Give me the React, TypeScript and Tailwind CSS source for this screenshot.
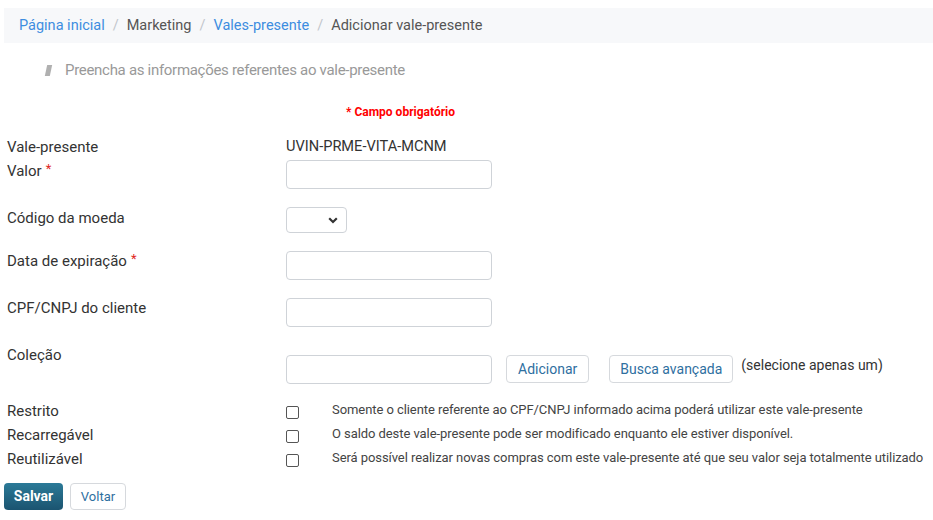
import React from "react";

const font = { fontFamily: "Roboto, 'Noto Sans', sans-serif" };

function Label({ children, required }: { children: React.ReactNode; required?: boolean }) {
  return (
    <div className="w-[279px] shrink-0 text-[15px] leading-[20px] text-[#333]">
      {children}
      {required && <span className="ml-1 align-top text-[13px] leading-[16px] text-[#e0281e]">*</span>}
    </div>
  );
}

function TextInput() {
  return (
    <input
      type="text"
      className="h-[29px] w-[206px] rounded-[4px] border border-[#cfd3d8] bg-white px-2 text-[14px] outline-none"
    />
  );
}

function CheckRow({ label, text }: { label: string; text: string }) {
  return (
    <div className="flex h-[24px] items-start">
      <Label>{label}</Label>
      <div className="w-[46px] shrink-0 pt-[5px]">
        <span className="block h-[13px] w-[13px] rounded-[2px] border border-[#555] bg-white" />
      </div>
      <div className="text-[13px] leading-[18px] tracking-[-0.07px] text-[#444]">{text}</div>
    </div>
  );
}

export default function App() {
  return (
    <div className="min-h-[520px] bg-white" style={font}>
      <div className="pt-2">
        <div className="ml-1 flex h-[35px] items-center bg-[#f7f8fa] pl-[15px] text-[14.5px]">
          <span className="text-[#3d8de0]">Página inicial</span>
          <span className="px-[8px] text-[#c2c6cc]">/</span>
          <span className="text-[#555]">Marketing</span>
          <span className="px-[8px] text-[#c2c6cc]">/</span>
          <span className="text-[#3d8de0]">Vales-presente</span>
          <span className="px-[8px] text-[#c2c6cc]">/</span>
          <span className="text-[#555]">Adicionar vale-presente</span>
        </div>
      </div>

      <div className="mt-[16px] flex h-[22px] items-center pl-[46px]">
        <span className="mr-[14px] inline-block h-[11px] w-[5px] -skew-x-12 bg-[#b0b0b0]" />
        <span className="text-[15px] tracking-[-0.3px] text-[#999]">
          Preencha as informações referentes ao vale-presente
        </span>
      </div>

      <div className="mt-[22px] pl-[346px] text-[12px] font-bold text-[#ff0000]">* Campo obrigatório</div>

      <div className="mt-[16px] pl-[7px]">
        <div className="flex h-[24px] items-start">
          <Label>Vale-presente</Label>
          <div className="text-[14.6px] leading-[18px] text-[#333]">UVIN-PRME-VITA-MCNM</div>
        </div>

        <div className="flex h-[47px] items-start">
          <Label required>Valor</Label>
          <div className="-mt-[1px]">
            <TextInput />
          </div>
        </div>

        <div className="flex h-[43px] items-start">
          <Label>Código da moeda</Label>
          <div className="relative -mt-[1px] h-[26px] w-[61px] rounded-[4px] border border-[#cfd3d8] bg-white">
            <svg
              className="absolute right-[8px] top-[9px]"
              width="10"
              height="7"
              viewBox="0 0 10 7"
              fill="none"
              stroke="#333"
              strokeWidth="2.2"
            >
              <path d="M1.2 1.3 5 5 8.8 1.3" />
            </svg>
          </div>
        </div>

        <div className="flex h-[47px] items-start">
          <Label required>Data de expiração</Label>
          <div>
            <TextInput />
          </div>
        </div>

        <div className="flex h-[47px] items-start">
          <Label>CPF/CNPJ do cliente</Label>
          <div>
            <TextInput />
          </div>
        </div>

        <div className="flex h-[56px] items-start">
          <Label>Coleção</Label>
          <div className="mt-[10px] flex items-start">
            <TextInput />
            <button className="ml-[14px] h-[28px] rounded-[4px] border border-[#d6d9dd] bg-white px-[11px] text-[14px] text-[#2f6f9f]">
              Adicionar
            </button>
            <button className="ml-[20px] h-[28px] rounded-[4px] border border-[#d6d9dd] bg-white px-[10px] text-[14px] text-[#2f6f9f]">
              Busca avançada
            </button>
            <span className="ml-[8px] mt-[1px] text-[14px] leading-[18px] text-[#333]">(selecione apenas um)</span>
          </div>
        </div>

        <CheckRow
          label="Restrito"
          text="Somente o cliente referente ao CPF/CNPJ informado acima poderá utilizar este vale-presente"
        />
        <CheckRow
          label="Recarregável"
          text="O saldo deste vale-presente pode ser modificado enquanto ele estiver disponível."
        />
        <CheckRow
          label="Reutilizável"
          text="Será possível realizar novas compras com este vale-presente até que seu valor seja totalmente utilizado"
        />
      </div>

      <div className="mt-[10px] flex gap-[7px] pl-1">
        <button className="h-[27px] w-[59px] rounded-[4px] bg-gradient-to-b from-[#2b7a98] to-[#1b5470] text-[14px] font-bold text-white">
          Salvar
        </button>
        <button className="h-[27px] w-[56px] rounded-[4px] border border-[#d6d9dd] bg-white text-[13px] text-[#2f6f9f]">
          Voltar
        </button>
      </div>
    </div>
  );
}
